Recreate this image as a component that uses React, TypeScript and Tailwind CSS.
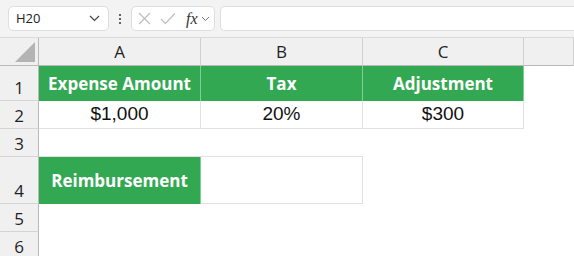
import React from "react";

const cellFont = { fontFamily: '"Liberation Sans", Arial, sans-serif' };
const uiFont = { fontFamily: '"Open Sans", sans-serif' };

const RowHead: React.FC<{ n: number }> = ({ n }) => (
  <div
    className="flex items-end justify-center bg-[#f0f0f0] border-b border-[#d4d4d4] border-r border-r-[#b9b9b9] text-[17px] text-[#1f1f1f]"
    style={uiFont}
  >
    <span className="leading-[24px]">{n}</span>
  </div>
);

const Green: React.FC<{ children: React.ReactNode }> = ({ children }) => (
  <div
    className="flex items-center justify-center bg-[#33a852] border-r border-[#7fcf95] text-white font-bold text-[17px]"
    style={uiFont}
  >
    {children}
  </div>
);

const Data: React.FC<{ children?: React.ReactNode }> = ({ children }) => (
  <div
    className="flex items-center justify-center bg-white border-r border-b border-[#e1e1e1] text-[19px] text-[#111]"
    style={cellFont}
  >
    {children}
  </div>
);

export default function App() {
  return (
    <div className="w-[574px] h-[256px] overflow-hidden bg-white select-none">
      {/* formula bar */}
      <div className="h-[38px] bg-[#f3f3f3] border-b border-[#dadada] flex items-center pl-2">
        <div className="w-[101px] h-[25px] bg-white border border-[#dedede] rounded-[5px] flex items-center justify-between px-[7px]">
          <span className="text-[13px] text-[#222]" style={uiFont}>H20</span>
          <svg width="11" height="7" viewBox="0 0 11 7" className="mr-[1px]">
            <path d="M1 1l4.5 4.5L10 1" fill="none" stroke="#444" strokeWidth="1.2" />
          </svg>
        </div>
        <div className="w-[22px] flex flex-col items-center gap-[2px]">
          <span className="w-[2px] h-[2px] bg-[#333] rounded-full" />
          <span className="w-[2px] h-[2px] bg-[#333] rounded-full" />
          <span className="w-[2px] h-[2px] bg-[#333] rounded-full" />
        </div>
        <div className="w-[84px] h-[25px] bg-white border border-[#dedede] rounded-[5px] flex items-center pl-[6px]">
          <svg width="13" height="13" viewBox="0 0 13 13">
            <path d="M1 1l11 11M12 1L1 12" stroke="#bdbdbd" strokeWidth="1.2" />
          </svg>
          <svg width="16" height="13" viewBox="0 0 16 13" className="ml-[9px]">
            <path d="M1 7l4.5 4.5L15 1.5" fill="none" stroke="#bdbdbd" strokeWidth="1.2" />
          </svg>
          <span
            className="ml-[10px] text-[16px] italic text-[#333] leading-none"
            style={{ fontFamily: '"Liberation Serif", serif' }}
          >
            fx
          </span>
          <svg width="9" height="6" viewBox="0 0 9 6" className="ml-[3px]">
            <path d="M1 1l3.5 3.5L8 1" fill="none" stroke="#777" strokeWidth="1" />
          </svg>
        </div>
        <div className="ml-[5px] flex-1 h-[25px] bg-white border border-[#dedede] border-r-0 rounded-l-[5px]" />
      </div>

      {/* sheet */}
      <div className="grid grid-cols-[39px_162px_162px_161px_1fr] grid-rows-[28px_35px_28px_28px_47px_28px_28px]">
        {/* column headers */}
        <div className="bg-[#f0f0f0] border-b border-[#b9b9b9] border-r border-r-[#b9b9b9] flex items-end justify-end pr-[3px] pb-[3px]">
          <svg width="20" height="20" viewBox="0 0 20 20">
            <path d="M20 0L20 20L0 20Z" fill="#b4b4b4" />
          </svg>
        </div>
        {["A", "B", "C", ""].map((c, i) => (
          <div
            key={i}
            className="bg-[#f0f0f0] border-b border-[#b9b9b9] border-r border-r-[#d0d0d0] flex items-center justify-center text-[17px] text-[#1f1f1f]"
            style={uiFont}
          >
            {c}
          </div>
        ))}

        {/* row 1 */}
        <RowHead n={1} />
        <Green>Expense Amount</Green>
        <Green>Tax</Green>
        <Green>Adjustment</Green>
        <div className="bg-white" />

        {/* row 2 */}
        <RowHead n={2} />
        <Data>$1,000</Data>
        <Data>20%</Data>
        <Data>$300</Data>
        <div className="bg-white" />

        {/* row 3 */}
        <RowHead n={3} />
        <div className="col-span-4 bg-white border-b border-[#e1e1e1] w-[324px]" />

        {/* row 4 */}
        <RowHead n={4} />
        <Green>Reimbursement</Green>
        <Data />
        <div className="col-span-2 bg-white" />

        {/* row 5 */}
        <RowHead n={5} />
        <div className="col-span-4 bg-white" />

        {/* row 6 */}
        <RowHead n={6} />
        <div className="col-span-4 bg-white" />
      </div>
    </div>
  );
}
